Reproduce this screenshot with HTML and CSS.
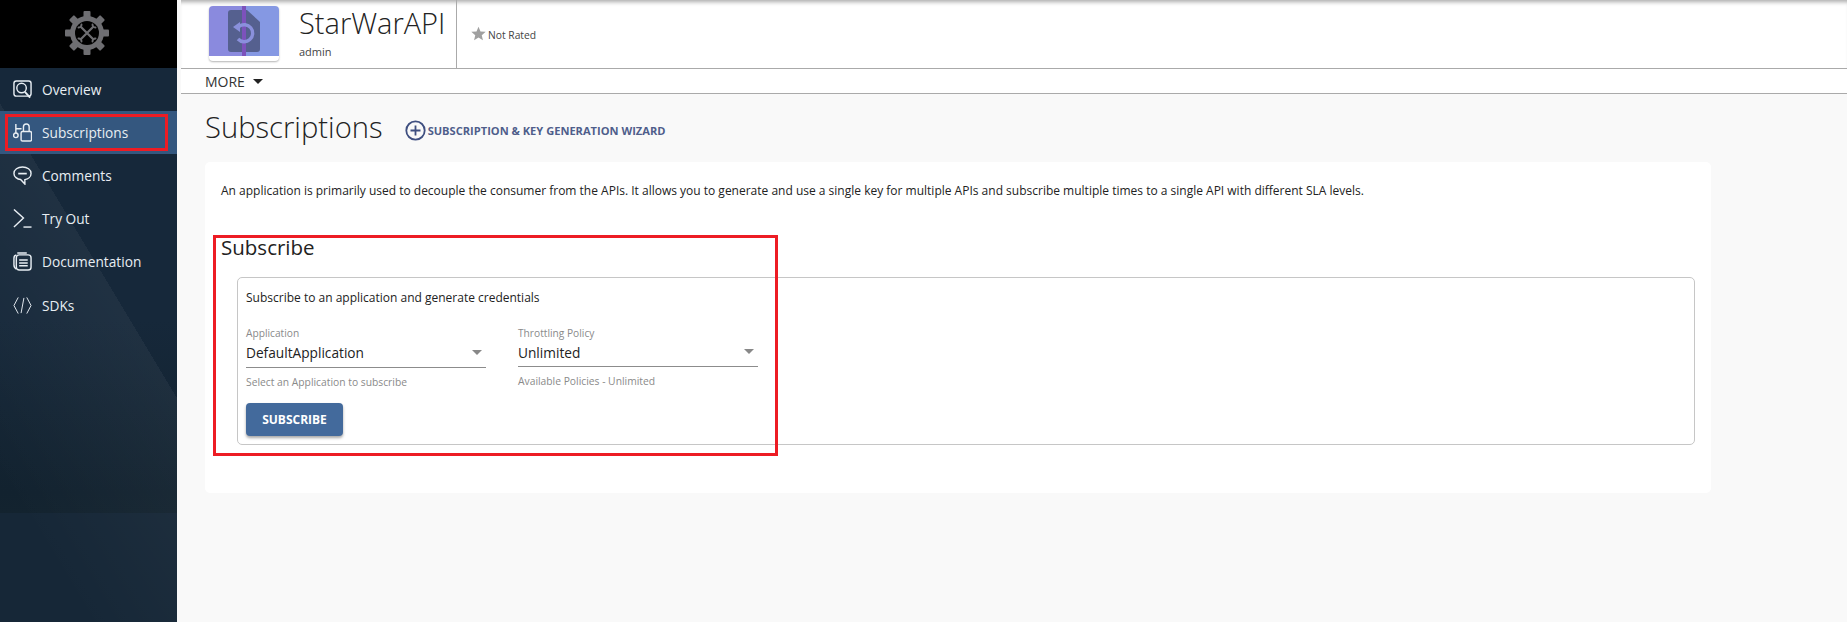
FILE: index.html
```html
<!DOCTYPE html>
<html lang="en">
<head>
  <meta charset="UTF-8">
  <title>Subscriptions</title>
  <link rel="stylesheet" href="styles.css">
</head>
<body>
<aside class="side">
  <div class="logo">
    <svg width="44" height="44" viewBox="0 0 44 44">
      <g fill="#6e6e72">
        <rect x="18.500" y="0" width="7" height="44" rx="1"/>
        <rect x="18.500" y="0" width="7" height="44" rx="1" transform="rotate(45 22 22)"/>
        <rect x="18.500" y="0" width="7" height="44" rx="1" transform="rotate(90 22 22)"/>
        <rect x="18.500" y="0" width="7" height="44" rx="1" transform="rotate(135 22 22)"/>
        <circle cx="22" cy="22" r="17"/>
      </g>
      <circle cx="22" cy="22" r="12" fill="#000"/>
      <g stroke="#6e6e72" fill="none" stroke-linecap="round">
        <path d="M16 16L28 28M28 16L16 28" stroke-width="2.200"/>
        <path d="M13.500 16.500a2.800 2.800 0 0 0 3-3" stroke-width="1.900"/>
        <path d="M27.500 13.500a2.800 2.800 0 0 0 3 3" stroke-width="1.900"/>
        <path d="M13.500 27.500a2.800 2.800 0 0 1 3 3" stroke-width="1.900"/>
        <path d="M27.500 30.500a2.800 2.800 0 0 1 3-3" stroke-width="1.900"/>
      </g>
    </svg>
  </div>
  <nav class="nav">
    <a class="nav-item">
      <svg class="nav-icon" viewBox="0 0 20 20"><rect x="1" y="1" width="18" height="16" rx="2.500"/><circle cx="9" cy="8.500" r="5"/><path d="M12.500 12.500L18 18.500" stroke-width="2"/></svg>
      <span>Overview</span>
    </a>
    <a class="nav-item active">
      <svg class="nav-icon" viewBox="0 0 20 20"><rect x="8.500" y="9" width="11" height="10" rx="1.500"/><path d="M11 9V4a3 3 0 0 1 6 0v5"/><path d="M3 1v9.500M3 6h6"/><circle cx="3" cy="13" r="2.400"/></svg>
      <span>Subscriptions</span>
    </a>
    <a class="nav-item">
      <svg class="nav-icon" viewBox="0 0 20 20"><path d="M10 1c5 0 9 2.900 9 6.800 0 3.400-3 5.900-6.500 6.500L12.500 19 8 14.200C4.500 14 1 11.400 1 7.800 1 3.900 5 1 10 1z"/><path d="M5.500 8h9" stroke-width="1.800"/></svg>
      <span>Comments</span>
    </a>
    <a class="nav-item">
      <svg class="nav-icon" viewBox="0 0 20 20"><path d="M1 0.500L11 9.500 1 19"/><path d="M11 19h8.500"/></svg>
      <span>Try Out</span>
    </a>
    <a class="nav-item">
      <svg class="nav-icon" viewBox="0 0 20 20"><rect x="3.500" y="3" width="15.500" height="16" rx="3"/><path d="M3.500 3C1.500 3.500 1 4.500 1 6.500v7c0 2 .5 3.500 2.500 4.500M4.500 1h10"/><path d="M6.500 8.500h9M6.500 11.500h9M6.500 14.500h9" stroke-width="1.500"/></svg>
      <span>Documentation</span>
    </a>
    <a class="nav-item">
      <svg class="nav-icon thin" viewBox="0 0 20 20"><path d="M5.500 1.500L1 10l4.500 8.500M14.500 1.500L19 10l-4.500 8.500M11.500 2L8.500 18"/></svg>
      <span>SDKs</span>
    </a>
  </nav>
</aside>

<main class="main">
  <header class="head">
    <div class="thumb">
      <svg width="70" height="50" viewBox="0 0 70 50">
        <rect width="34" height="50" fill="#8a8ade"/>
        <rect x="34" width="36" height="50" fill="#8598e3"/>
        <path d="M22 4h16l13 12v27a3 3 0 0 1-3 3H22a3 3 0 0 1-3-3V7a3 3 0 0 1 3-3z" fill="#55608f"/>
        <rect x="33" width="4" height="50" fill="#7c52bb"/>
        <path d="M30 20.500a8.500 8.500 0 1 1-1 12.500" fill="none" stroke="#8a90dc" stroke-width="3.400"/>
        <path d="M31 16v10l-7-5z" fill="#8a90dc"/>
      </svg>
    </div>
    <div class="api-name">
      <h1 class="api-title">StarWarAPI</h1>
      <div class="api-owner">admin</div>
    </div>
    <div class="rating">
      <svg class="rating-star" width="15" height="15" viewBox="0 0 24 24"><path d="M12 1l3.200 7.600 8.300.7-6.300 5.400 1.900 8.100-7.100-4.300-7.100 4.300 1.900-8.100L.5 9.300l8.300-.7z" fill="#a0a0a0"/></svg>
      <span class="rating-text">Not Rated</span>
    </div>
  </header>
  <div class="more">
    <span>MORE</span><i class="more-caret"></i>
  </div>

  <div class="content">
    <div class="title-row">
      <h2 class="page-title">Subscriptions</h2>
      <a class="wizard">
        <svg width="21" height="21" viewBox="0 0 21 21"><circle cx="10.500" cy="10.500" r="9.200" fill="none" stroke="#3f4f80" stroke-width="1.800"/><path d="M10.500 5.500v10M5.500 10.500h10" stroke="#3f4f80" stroke-width="1.800"/></svg>
        <span>SUBSCRIPTION &amp; KEY GENERATION WIZARD</span>
      </a>
    </div>

    <section class="card">
      <p class="intro">An application is primarily used to decouple the consumer from the APIs. It allows you to generate and use a single key for multiple APIs and subscribe multiple times to a single API with different SLA levels.</p>
      <h3 class="sub-title">Subscribe</h3>
      <div class="sub-box">
        <p class="sub-text">Subscribe to an application and generate credentials</p>
        <div class="fields">
          <div class="field">
            <label class="field-label">Application</label>
            <div class="select"><span>DefaultApplication</span><i class="select-caret"></i></div>
            <div class="field-help">Select an Application to subscribe</div>
          </div>
          <div class="field field-b">
            <label class="field-label">Throttling Policy</label>
            <div class="select"><span>Unlimited</span><i class="select-caret"></i></div>
            <div class="field-help">Available Policies - Unlimited</div>
          </div>
        </div>
        <button class="btn">SUBSCRIBE</button>
      </div>
    </section>
  </div>
</main>

<div class="mark mark-nav"></div>
<div class="mark mark-sub"></div>
</body>
</html>
```

FILE: styles.css
```css
html, body {
  margin: 0;
  padding: 0;
  height: 622px;
  overflow: hidden;
}
body {
  display: flex;
  font-family: "Open Sans", "Noto Sans", sans-serif;
  background: #f9f9f9;
  color: #222;
}
h1, h2, h3, p {
  margin: 0;
  font-weight: normal;
}

/* left menu */
.side {
  width: 177px;
  flex: none;
  height: 622px;
  display: flex;
  flex-direction: column;
  background-color: #16283a;
  background-image:
    linear-gradient(239deg, transparent 205px, rgba(255,255,255,.045) 205px, rgba(255,255,255,0) 400px),
    linear-gradient(180deg, #16283a 0, #16283a 320px, #12222f 492px, #13232f 513px, #162737 513px, #162737 100%);
}
.logo {
  height: 68px;
  box-sizing: border-box;
  padding: 0 3px 3px 0;
  background: #000;
  display: flex;
  align-items: center;
  justify-content: center;
}
.nav-item {
  height: 43.1px;
  display: flex;
  align-items: center;
  gap: 10px;
  padding-left: 13px;
  color: #e8eef3;
  font-size: 13.700px;
}
.nav-item.active {
  background: #34577f;
}
.nav-icon {
  width: 19px;
  height: 19px;
  flex: none;
  fill: none;
  stroke: #e8eef3;
  stroke-width: 1.500;
}
.nav-icon.thin {
  stroke-width: 1;
}

/* api header */
.main {
  flex: 1;
  min-width: 0;
  display: flex;
  flex-direction: column;
}
.head {
  height: 68px;
  margin-left: 4px;
  background: #fff;
  border-bottom: 1px solid #aaa;
  box-shadow: inset 0 5px 4px -3px #aaa;
  display: flex;
}
.thumb {
  width: 70px;
  height: 55px;
  margin: 6px 0 0 28px;
  background: #fff;
  border-radius: 4px;
  overflow: hidden;
  box-shadow: 0 1px 2px rgba(0,0,0,.3);
  align-self: flex-start;
}
.thumb svg {
  display: block;
}
.api-name {
  margin-left: 20px;
  width: 157px;
  border-right: 1px solid #aaa;
}
.api-title {
  font-size: 29px;
  font-weight: 300;
  line-height: 41px;
  margin-top: 2px;
}
.api-owner {
  font-size: 11px;
  line-height: 15px;
  margin-top: 1px;
  color: #444;
}
.rating {
  display: flex;
  align-items: center;
  gap: 2px;
  margin: 26px 0 0 14px;
  height: 16px;
  font-size: 10.300px;
  color: #444;
}
.rating-star {
  margin-top: -2px;
}
.rating-text {
  margin-top: 2px;
}
.more {
  height: 24px;
  margin-left: 4px;
  padding-left: 24px;
  background: #fff;
  border-bottom: 1px solid #aaa;
  display: flex;
  align-items: center;
  font-size: 14px;
  color: #333;
}
.more-caret {
  margin-left: 8px;
  border: 5px solid transparent;
  border-top-color: #222;
  border-bottom: 0;
}

/* page */
.content {
  padding: 0 0 0 28px;
}
.title-row {
  height: 68px;
  display: flex;
  align-items: center;
}
.page-title {
  font-size: 29.200px;
  font-weight: 300;
  line-height: 41px;
  margin-top: -1px;
}
.wizard {
  display: flex;
  align-items: center;
  gap: 2px;
  margin: 4px 0 0 22px;
  font-size: 11.100px;
  font-weight: 700;
  color: #4f5e8b;
}
.card {
  width: 1506px;
  height: 331px;
  background: #fff;
  border-radius: 5px;
  padding: 0 16px;
  box-sizing: border-box;
}
.intro {
  font-size: 12px;
  line-height: 17px;
  padding-top: 20px;
}
.sub-title {
  font-size: 20.500px;
  line-height: 27px;
  margin-top: 35px;
}
.sub-box {
  width: 1458px;
  height: 168px;
  margin: 16px 0 0 16px;
  box-sizing: border-box;
  border: 1px solid #c6c6c6;
  border-radius: 5px;
  padding: 11px 0 0 8px;
}
.sub-text {
  font-size: 12px;
  line-height: 17px;
}
.fields {
  display: flex;
  gap: 32px;
  margin-top: 20px;
}
.field {
  width: 240px;
}
.field-label {
  display: block;
  font-size: 10.200px;
  line-height: 14px;
  color: #8a8a8a;
}
.select {
  height: 25px;
  padding: 0 4px 2px 0;
  border-bottom: 1px solid #8c8c8c;
  display: flex;
  align-items: center;
  justify-content: space-between;
  font-size: 13.700px;
  color: #222;
}
.select-caret {
  border: 5px solid transparent;
  border-top-color: #888;
  border-bottom: 0;
  margin-top: -1px;
}
.field-help {
  font-size: 10.300px;
  line-height: 14px;
  margin-top: 7px;
  color: #8a8a8a;
}
.field-b .select {
  height: 24px;
}
.btn {
  display: block;
  width: 97px;
  height: 33px;
  margin-top: 14px;
  border: 0;
  border-radius: 4px;
  background: #436a9c;
  color: #fff;
  font-family: inherit;
  font-size: 12px;
  font-weight: 700;
  box-shadow: 0 2px 3px rgba(0,0,0,.35);
}

/* red marks drawn over the screenshot */
.mark {
  position: absolute;
  border: 3px solid #ed1c24;
  box-sizing: border-box;
}
.mark-nav {
  left: 5px;
  top: 114px;
  width: 163px;
  height: 37px;
}
.mark-sub {
  left: 213px;
  top: 235px;
  width: 565px;
  height: 221px;
}
```
